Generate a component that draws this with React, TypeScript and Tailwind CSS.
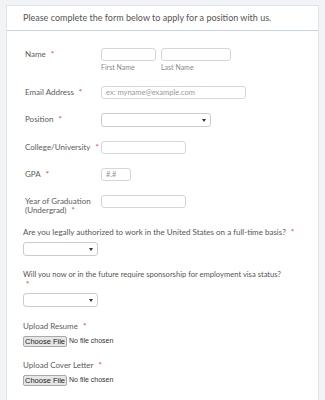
import React from 'react';

const font = { fontFamily: 'Lato, "Noto Sans", sans-serif' };
const arial = { fontFamily: '"Liberation Sans", Arial, sans-serif' };

function Star() {
  return <span className="text-[#f23a3c] ml-[5px]">*</span>;
}

function TextBox({ w, placeholder }: { w: number; placeholder?: string }) {
  return (
    <div
      className="h-[13px] border border-[#d3d7dd] rounded-[3px] bg-white text-[7.5px] text-[#9a9a9a] pl-[4px] leading-[11px]"
      style={{ width: w }}
    >
      {placeholder}
    </div>
  );
}

function SelectBox({ w }: { w: number }) {
  return (
    <div
      className="h-[14px] border border-[#c8ccd2] rounded-[3px] bg-white flex items-center justify-end pr-[4px]"
      style={{ width: w }}
    >
      <svg width="4" height="3" viewBox="0 0 4 3">
        <path d="M0 0h4L2 3z" fill="#333" />
      </svg>
    </div>
  );
}

function FileRow() {
  return (
    <div className="flex items-center h-[11px] mt-[4px]">
      <div
        className="h-[11px] w-[44px] border border-[#a9a9a9] rounded-[2px] bg-[#e6e6e6] text-[7.5px] text-[#222] flex items-center justify-center"
        style={arial}
      >
        Choose File
      </div>
      <span className="ml-[2px] text-[7px] text-[#333]" style={arial}>
        No file chosen
      </span>
    </div>
  );
}

function Row({ label, top, h, children }: { label: React.ReactNode; top: number; h: number; children: React.ReactNode }) {
  return (
    <div className="flex" style={{ marginTop: top, height: h }}>
      <div className="w-[78px] text-[8px] leading-[13px] text-[#5c5c5c] pl-[2px] whitespace-nowrap">{label}</div>
      <div>{children}</div>
    </div>
  );
}

export default function App() {
  return (
    <div className="w-[325px] h-[400px] overflow-hidden bg-[#f2f3f4] pt-[5px] pl-[6px]" style={font}>
      <div className="w-[313px] h-[400px] bg-white border border-[#dde4ec]">
        <div className="h-[25px] border-b border-[#c6d6e8] pl-[16px] flex items-center text-[9px] text-[#555]">
          Please complete the form below to apply for a position with us.
        </div>

        <div className="pl-[16px] pr-[16px]">
          <Row label={<>Name<Star /></>} top={17} h={13}>
            <div className="flex gap-[5px]">
              <TextBox w={55} />
              <TextBox w={70} />
            </div>
          </Row>
          <div className="flex h-[10px] pl-[78px] text-[7px] leading-[10px] text-[#8a8a8a] mt-[1px]">
            <span className="w-[60px]">First Name</span>
            <span>Last Name</span>
          </div>

          <Row label={<>Email Address<Star /></>} top={14} h={13}>
            <TextBox w={145} placeholder="ex: myname@example.com" />
          </Row>

          <Row label={<>Position<Star /></>} top={14} h={14}>
            <SelectBox w={110} />
          </Row>

          <Row label={<>College/University<Star /></>} top={14} h={13}>
            <TextBox w={85} />
          </Row>

          <Row label={<>GPA<Star /></>} top={14} h={13}>
            <TextBox w={30} placeholder="#.#" />
          </Row>

          <div className="flex mt-[14px] h-[22px]">
            <div className="w-[78px] text-[8px] leading-[9px] text-[#5c5c5c] pl-[2px] pt-[2px]">
              Year of Graduation
              <br />
              (Undergrad)
              <Star />
            </div>
            <TextBox w={85} />
          </div>

          <div className="mt-[9px] h-[12px] text-[8px] leading-[12px] text-[#555] whitespace-nowrap">
            Are you legally authorized to work in the United States on a full-time basis?
            <Star />
          </div>
          <div className="mt-[4px] h-[14px]">
            <SelectBox w={75} />
          </div>

          <div className="mt-[13px] h-[20px] text-[7.6px] leading-[10px] text-[#555]">
            <div className="whitespace-nowrap">
              Will you now or in the future require sponsorship for employment visa status?
            </div>
            <div className="text-[#f23a3c] text-[8px] pl-[3px]">*</div>
          </div>
          <div className="mt-[4px] h-[14px]">
            <SelectBox w={75} />
          </div>

          <div className="mt-[13px] h-[12px] text-[8px] leading-[12px] text-[#5c5c5c]">
            Upload Resume
            <Star />
          </div>
          <FileRow />

          <div className="mt-[12px] h-[12px] text-[8px] leading-[12px] text-[#5c5c5c]">
            Upload Cover Letter
            <Star />
          </div>
          <FileRow />
        </div>
      </div>
    </div>
  );
}
